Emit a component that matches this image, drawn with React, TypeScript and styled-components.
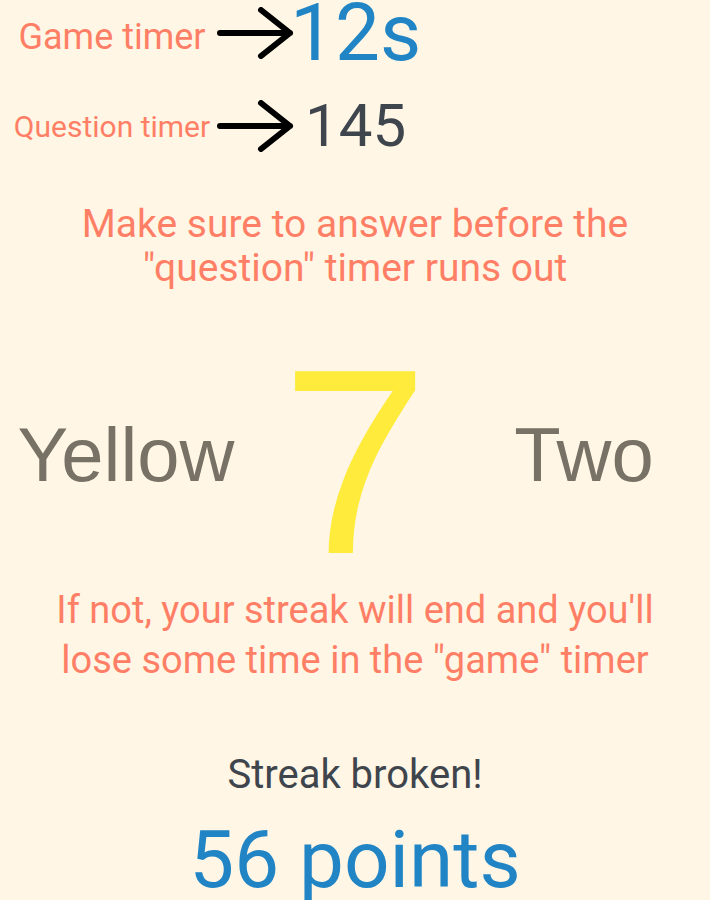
import React from "react";
import styled, { createGlobalStyle } from "styled-components";

const GlobalStyle = createGlobalStyle`
  html, body {
    margin: 0;
    padding: 0;
    background: #fff6e5;
  }
  body {
    font-family: Roboto, "Noto Sans", sans-serif;
  }
`;

const Page = styled.div`
  width: 710px;
  height: 900px;
  overflow: hidden;
  background: #fff6e5;
  display: flex;
  flex-direction: column;
`;

const TimerRow = styled.div<{ $height: number; $top: number }>`
  display: flex;
  align-items: center;
  height: ${(p) => p.$height}px;
  margin-top: ${(p) => p.$top}px;
`;

const TimerLabel = styled.div<{ $size: number; $shift: number }>`
  box-sizing: border-box;
  width: 214px;
  padding-left: 10px;
  text-align: center;
  color: #ff7f66;
  font-size: ${(p) => p.$size}px;
  line-height: 1;
  white-space: nowrap;
  margin-top: ${(p) => p.$shift}px;
`;

const TimerValue = styled.div<{ $size: number; $color: string; $offset: number }>`
  color: ${(p) => p.$color};
  font-size: ${(p) => p.$size}px;
  line-height: 1;
  margin-left: ${(p) => p.$offset}px;
  white-space: nowrap;
`;

const ArrowSvg = styled.svg`
  flex: none;
  width: 82px;
  height: 52px;
`;

const Hint = styled.p<{ $size: number; $lineHeight: number; $top: number }>`
  margin: ${(p) => p.$top}px 0 0;
  color: #ff7f66;
  font-size: ${(p) => p.$size}px;
  line-height: ${(p) => p.$lineHeight}px;
  text-align: center;
`;

const Challenge = styled.div`
  display: grid;
  grid-template-columns: 1fr 206px 1fr;
  align-items: center;
  justify-items: center;
  margin-top: 72px;
  height: 200px;
`;

const Word = styled.div`
  font-family: "Liberation Sans", Arial, sans-serif;
  font-size: 76px;
  line-height: 1;
  color: #787165;
  margin-bottom: 14px;
`;

const BigNumber = styled.div`
  font-family: "Liberation Sans", Arial, sans-serif;
  font-size: 264px;
  line-height: 200px;
  color: #ffeb3b;
`;

const Status = styled.div`
  margin-top: 66px;
  text-align: center;
  color: #3e454c;
  font-size: 40px;
  line-height: 48px;
`;

const Points = styled.div`
  margin-top: 21px;
  text-align: center;
  color: #2185c5;
  font-size: 80px;
  line-height: 80px;
`;

const Arrow = () => (
  <ArrowSvg viewBox="0 0 82 52" fill="none">
    <path
      d="M6 26 H76 M47 3 L76 26 L47 49"
      stroke="#000"
      strokeWidth={6}
      strokeLinecap="round"
      strokeLinejoin="round"
    />
  </ArrowSvg>
);

export default function App() {
  return (
    <>
      <GlobalStyle />
      <Page>
        <TimerRow $height={66} $top={0}>
          <TimerLabel $size={36} $shift={8}>Game timer</TimerLabel>
          <Arrow />
          <TimerValue $size={80} $color="#2185c5" $offset={-6}>12s</TimerValue>
        </TimerRow>
        <TimerRow $height={52} $top={34}>
          <TimerLabel $size={30} $shift={2}>Question timer</TimerLabel>
          <Arrow />
          <TimerValue $size={60} $color="#3e454c" $offset={9}>145</TimerValue>
        </TimerRow>
        <Hint $size={39} $lineHeight={44} $top={50}>
          Make sure to answer before the
          <br />
          "question" timer runs out
        </Hint>
        <Challenge>
          <Word>Yellow</Word>
          <BigNumber>7</BigNumber>
          <Word>Two</Word>
        </Challenge>
        <Hint $size={38} $lineHeight={50} $top={23}>
          If not, your streak will end and you'll
          <br />
          lose some time in the "game" timer
        </Hint>
        <Status>Streak broken!</Status>
        <Points>56 points</Points>
      </Page>
    </>
  );
}
